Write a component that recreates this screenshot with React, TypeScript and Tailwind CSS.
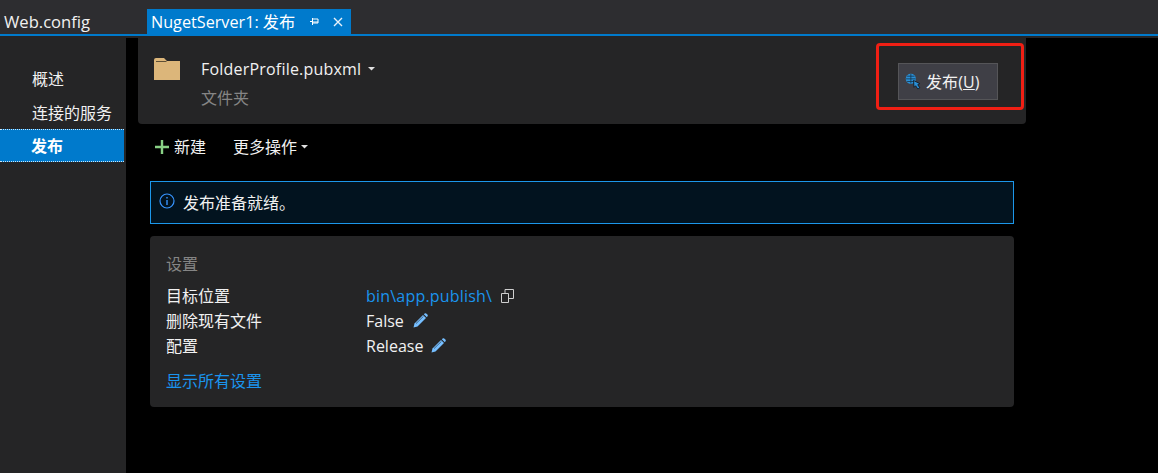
import React from 'react';

const font = "font-['Open_Sans','Noto_Sans_CJK_SC',sans-serif]";

const Pencil = () => (
  <svg width="15" height="15" viewBox="0 0 15 15" className="shrink-0">
    <path d="M0.5 14.5 L1.5 10.5 L10 2 L13 5 L4.5 13.5 Z" fill="#75beff" />
    <path d="M10.8 1.2 L12 0.3 Q12.6 0 13.2 0.4 L14.6 1.8 Q15 2.4 14.7 3 L13.8 4.2 Z" fill="#75beff" />
    <path d="M3 10.6 L10.4 3.4" stroke="#252526" strokeWidth="0.6" />
  </svg>
);

const Caret = () => (
  <svg width="7" height="4" viewBox="0 0 7 4" className="shrink-0">
    <path d="M0 0 H7 L3.5 3.5 Z" fill="#e0e0e0" />
  </svg>
);

const SettingRow = ({ label, children }: { label: string; children: React.ReactNode }) => (
  <div className="flex h-[25px] items-center">
    <div className="w-[200px] text-[#f1f1f1]">{label}</div>
    <div className="flex items-center">{children}</div>
  </div>
);

export default function App() {
  return (
    <div className={`${font} relative flex h-[473px] w-[1158px] flex-col overflow-hidden bg-black text-[16px] leading-[22px] text-[#f1f1f1]`}>
      {/* tab strip */}
      <div className="flex h-[36px] shrink-0 items-end border-b-2 border-[#007acc] bg-[#2d2d30]">
        <div className="flex h-[25px] w-[147px] items-center pl-[4px] text-[16.6px]">Web.config</div>
        <div className="flex h-[25px] w-[204px] items-center bg-[#007acc] pl-[4px] text-[16.2px] text-white">
          <span className="w-[159px] whitespace-nowrap">NugetServer1: 发布</span>
          <svg width="9" height="9" viewBox="0 0 9 9" className="shrink-0">
            <path d="M0 4.5 H2.5 M2.5 1 V8 M2.5 2 H8 V6 H2.5 M2.5 5 H8" stroke="#fff" strokeWidth="1" fill="none" />
          </svg>
          <svg width="10" height="10" viewBox="0 0 10 10" className="ml-[14px] shrink-0">
            <path d="M1 1 L9 9 M9 1 L1 9" stroke="#e8f2fa" strokeWidth="1.4" />
          </svg>
        </div>
      </div>

      <div className="flex min-h-0 flex-1">
        {/* left nav */}
        <div className="flex w-[126px] shrink-0 flex-col bg-[#252526] pt-[26px]">
          <div className="flex h-[34px] items-center pl-[32px]">概述</div>
          <div className="flex h-[33px] items-center pl-[32px]">连接的服务</div>
          <div className="flex h-[33px] w-[124px] items-center border-y border-dotted border-[#cfe6f7] bg-[#007acc] pl-[31px] font-bold text-white">
            发布
          </div>
        </div>

        <div className="flex-1 border-t-2 border-[#252526] bg-black pl-[12px]">
          {/* profile header */}
          <div className="flex h-[86px] w-[888px] rounded-b-[4px] bg-[#252526] pr-[28px] pl-[16px]">
            <svg width="26" height="22" viewBox="0 0 26 22" className="mt-[20px] shrink-0">
              <path d="M0 2 Q0 0 2 0 H10 L13 3 H26 V22 H0 Z" fill="#dcb67a" />
              <path d="M2 3 H12 L13 4 H2 Z" fill="#5e4f35" />
            </svg>
            <div className="ml-[21px] flex flex-col pt-[19px]">
              <div className="flex h-[24px] items-center tracking-[0.2px] text-[#f1f1f1]">
                FolderProfile.pubxml
                <span className="ml-[7px]"><Caret /></span>
              </div>
              <div className="mt-[6px] text-[#858585]">文件夹</div>
            </div>
            <button className="mt-[25px] ml-auto flex h-[37px] w-[100px] items-center border border-[#555558] bg-[#3f3f46] pl-[6px] text-[#f1f1f1]">
              <svg width="17" height="17" viewBox="0 0 16 16" className="shrink-0">
                <circle cx="5.5" cy="5.5" r="4.8" fill="#2a8fd6" />
                <path d="M1 5.5 H10 M5.5 1 V10 M2 3 H9 M2 8 H9" stroke="#16384f" strokeWidth="0.8" />
                <path d="M8 7 L14 10 L12 11 L14 14 L12 15 L10 12 L8.5 13.5 Z" fill="#2a8fd6" stroke="#101820" strokeWidth="0.8" />
              </svg>
              <span className="ml-[4px] tracking-[0.1px]">发布(<span className="underline">U</span>)</span>
            </button>
          </div>

          {/* actions */}
          <div className="mt-[12px] flex h-[22px] items-center pl-[17px]">
            <svg width="14" height="14" viewBox="0 0 14 14" className="shrink-0">
              <path d="M7 0 V14 M0 7 H14" stroke="#89d185" strokeWidth="2.4" />
            </svg>
            <span className="ml-[5px]">新建</span>
            <span className="ml-[27px]">更多操作</span>
            <span className="ml-[4px]"><Caret /></span>
          </div>

          {/* info banner */}
          <div className="mt-[23px] ml-[12px] flex h-[43px] w-[864px] items-center border border-[#1c97ea] bg-[#02131f] pl-[8px]">
            <svg width="16" height="16" viewBox="0 0 16 16" className="mb-[4px] shrink-0">
              <circle cx="8" cy="8" r="7" fill="none" stroke="#3794ff" strokeWidth="1.2" />
              <path d="M8 7 V12 M8 4 V5.6" stroke="#3794ff" strokeWidth="1.4" />
            </svg>
            <span className="ml-[8px]">发布准备就绪。</span>
          </div>

          {/* settings */}
          <div className="mt-[12px] ml-[12px] h-[171px] w-[864px] rounded-[4px] bg-[#252526] px-[16px] pt-[17px]">
            <div className="text-[#858585]">设置</div>
            <div className="mt-[8px] flex flex-col">
              <SettingRow label="目标位置">
                <span className="tracking-[0.2px] text-[#1a94ee]">bin\app.publish\</span>
                <svg width="13" height="14" viewBox="0 0 13 14" className="ml-[9px] shrink-0">
                  <path d="M0.5 4.5 H7.5 V13.5 H0.5 Z M4 4 V0.5 H12.5 V9.5 H8" fill="none" stroke="#cfcfcf" strokeWidth="1" />
                </svg>
              </SettingRow>
              <SettingRow label="删除现有文件">
                <span>False</span>
                <span className="ml-[9px]"><Pencil /></span>
              </SettingRow>
              <SettingRow label="配置">
                <span>Release</span>
                <span className="ml-[8px]"><Pencil /></span>
              </SettingRow>
            </div>
            <div className="mt-[12px] text-[#1a94ee]">显示所有设置</div>
          </div>
        </div>
      </div>

      {/* red annotation box drawn over the screenshot */}
      <div className="absolute top-[43px] left-[876px] h-[67px] w-[148px] rounded-[4px] border-[3px] border-[#f01f14]" />
    </div>
  );
}
